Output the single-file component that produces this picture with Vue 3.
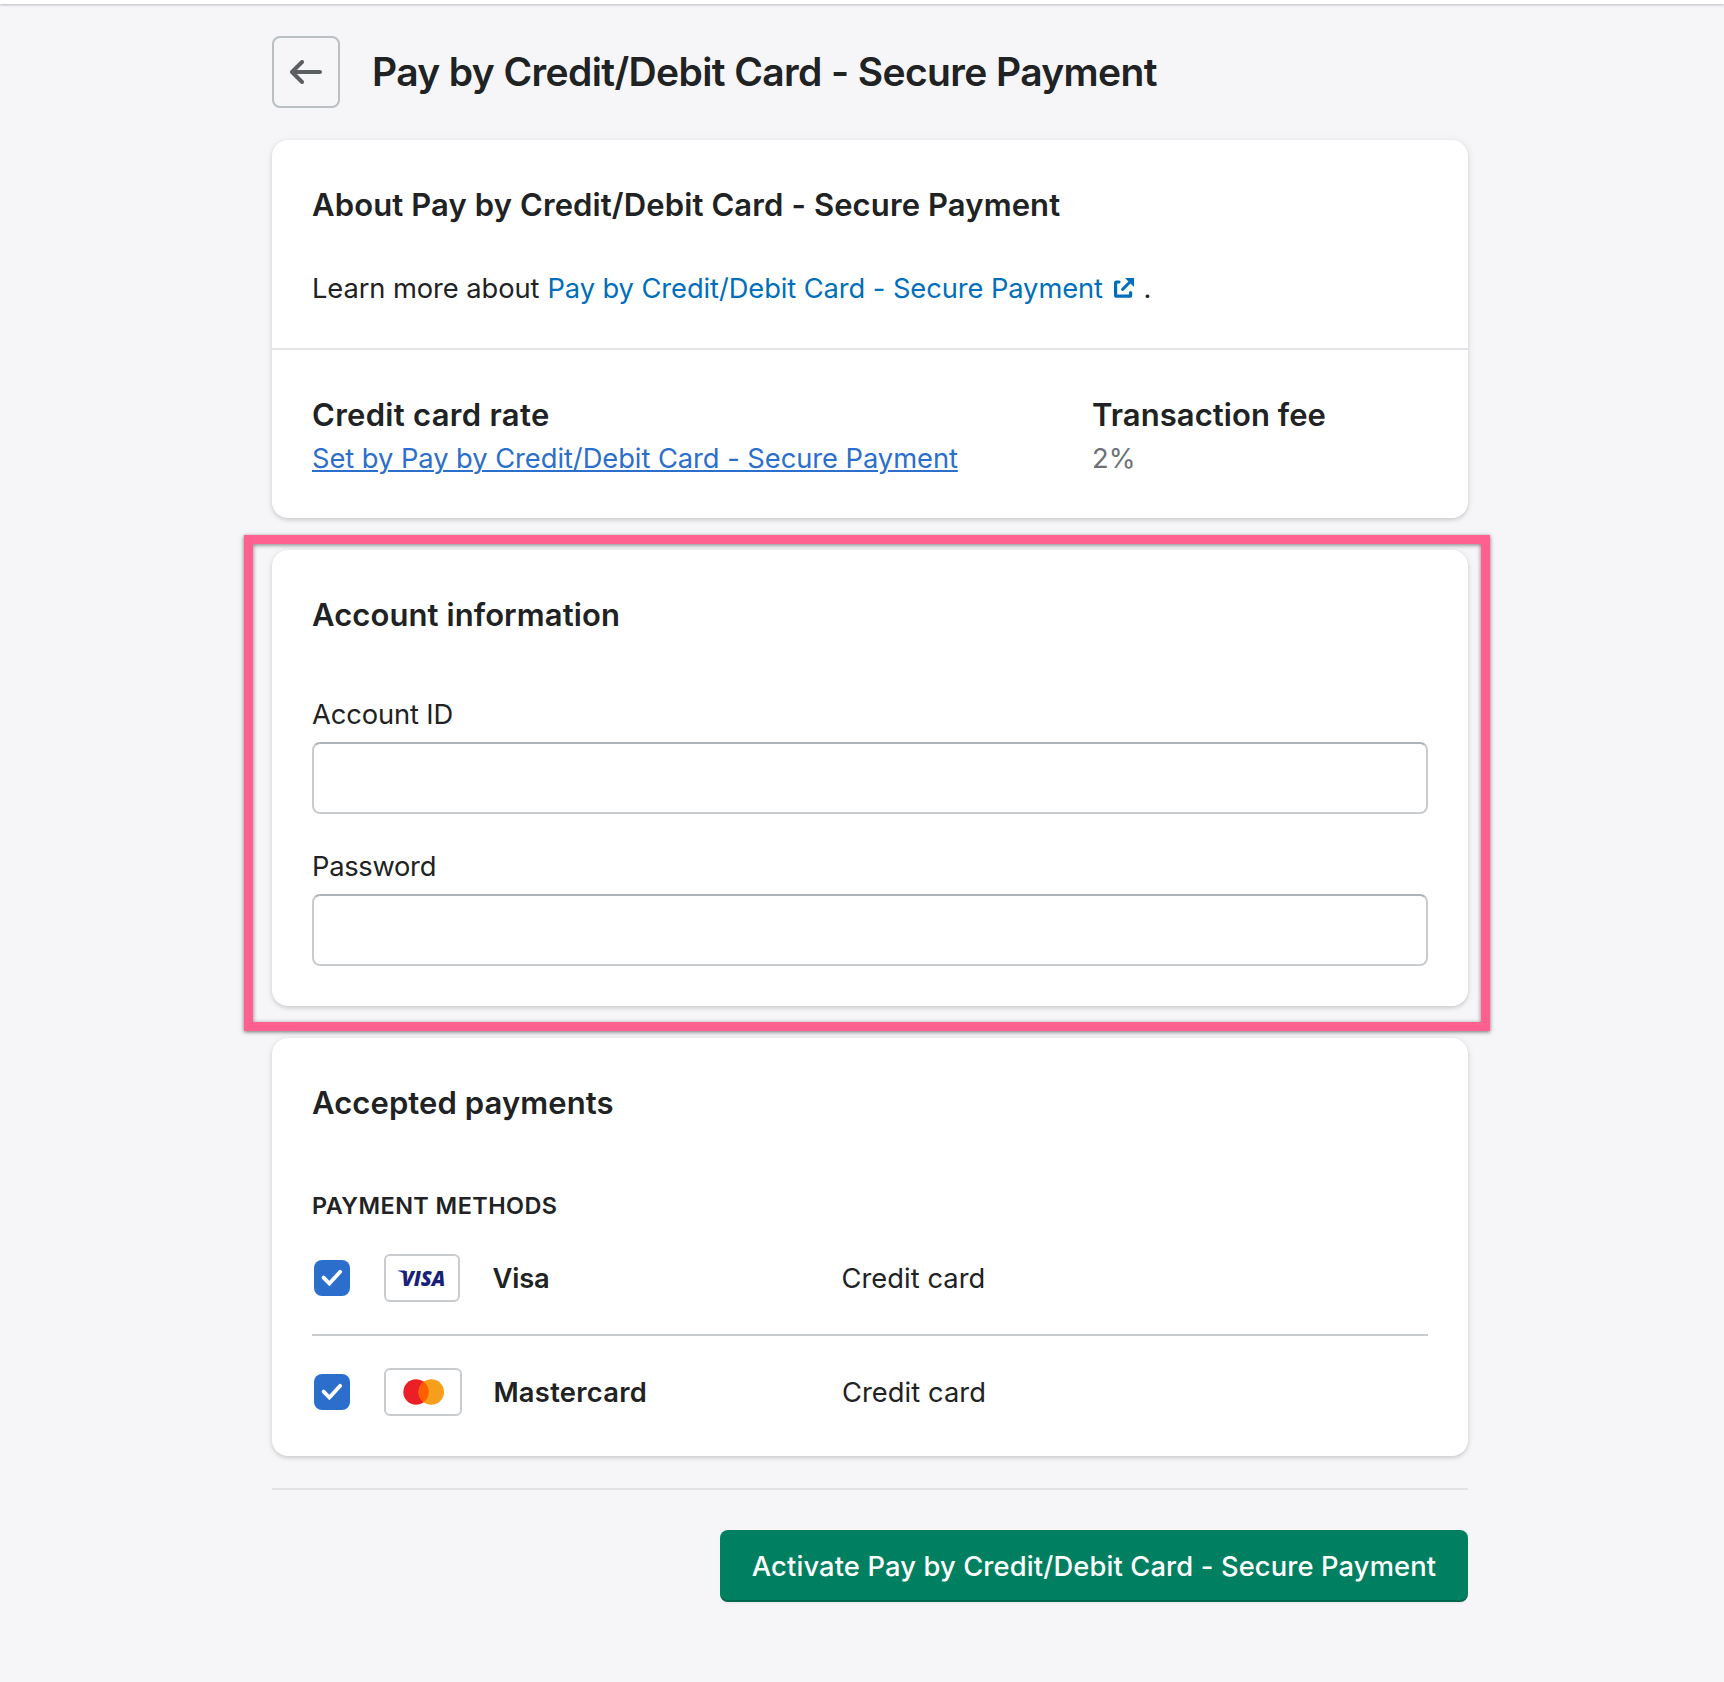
<script setup>
import { ref } from 'vue'

const name = 'Pay by Credit/Debit Card - Secure Payment'
const accountId = ref('')
const password = ref('')
const methods = ref([
  { id: 'visa', label: 'Visa', type: 'Credit card', enabled: true },
  { id: 'mastercard', label: 'Mastercard', type: 'Credit card', enabled: true },
])
</script>

<template>
  <div class="screen">
    <div class="topbar"></div>
    <main class="page">
      <header class="header">
        <button class="back" aria-label="Back">
          <svg width="32" height="24" viewBox="0 0 32 24" fill="none">
            <path d="M12 2 L2 12 L12 22 M2.4 12 H30" stroke="#5c5f62" stroke-width="4" stroke-linecap="round" stroke-linejoin="round" />
          </svg>
        </button>
        <h1>{{ name }}</h1>
      </header>

      <section class="card">
        <div class="section">
          <h2 class="about">About {{ name }}</h2>
          <p class="learn">
            <span>Learn more about</span>
            <a class="link">{{ name }}</a>
            <svg class="external" width="20" height="20" viewBox="0 0 20 20" fill="none">
              <path d="M5 4 H2.6 Q1.6 4 1.6 5 V17.2 Q1.6 18.2 2.6 18.2 H15.6 Q16.6 18.2 16.6 17.2 V14.6" stroke="#006fbb" stroke-width="3.2" stroke-linecap="round" />
              <path d="M8.6 11.4 L16 4" stroke="#006fbb" stroke-width="3" stroke-linecap="round" />
              <path d="M11 0 H20 V9 Z" fill="#006fbb" />
            </svg>
            <span class="period">.</span>
          </p>
        </div>
        <div class="section rates">
          <div class="rate">
            <h2 class="rate-title">Credit card rate</h2>
            <p><a class="set-by">Set by {{ name }}</a></p>
          </div>
          <div>
            <h2 class="fee-title">Transaction fee</h2>
            <p class="subdued">2%</p>
          </div>
        </div>
      </section>

      <section class="card highlighted">
        <div class="section">
          <h2>Account information</h2>
          <div class="fields">
            <label class="field">
              <span>Account ID</span>
              <input v-model="accountId" type="text" />
            </label>
            <label class="field">
              <span>Password</span>
              <input v-model="password" type="password" />
            </label>
          </div>
        </div>
        <div class="annotation"></div>
      </section>

      <section class="card">
        <div class="section payments">
          <h2>Accepted payments</h2>
          <h3>PAYMENT METHODS</h3>
          <ul>
            <li v-for="m in methods" :key="m.id" :class="m.id">
              <button class="check" role="checkbox" :aria-checked="m.enabled" @click="m.enabled = !m.enabled">
                <svg v-if="m.enabled" width="36" height="36" viewBox="0 0 36 36" fill="none">
                  <path d="M9.6 17.6 L15.4 23.6 L26.2 11.8" stroke="#fff" stroke-width="3.8" stroke-linecap="round" stroke-linejoin="miter" />
                </svg>
              </button>
              <span class="brand">
                <svg v-if="m.id === 'visa'" width="72" height="44" viewBox="0 0 72 44">
                  <path d="M12 14.6 H19 L21.5 21.5 C19.6 18.4 16.6 16 12 15.1 Z" fill="#1a1f78" />
                  <text x="15.4" y="29.5" textLength="44" lengthAdjust="spacingAndGlyphs" class="visa-mark">VISA</text>
                </svg>
                <svg v-else width="74" height="44" viewBox="0 0 74 44">
                  <circle cx="30" cy="22" r="12.7" fill="#eb2027" />
                  <circle cx="45.3" cy="22" r="12.7" fill="#f79e1b" />
                  <path d="M37.65 11.86 A12.7 12.7 0 0 1 37.65 32.14 A12.7 12.7 0 0 1 37.65 11.86 Z" fill="#ff5f00" />
                </svg>
              </span>
              <span class="method">{{ m.label }}</span>
              <span class="type">{{ m.type }}</span>
            </li>
          </ul>
        </div>
      </section>

      <footer class="actions">
        <button class="primary">Activate {{ name }}</button>
      </footer>
    </main>
  </div>
</template>

<style>
body {
  margin: 0;
  background: #f6f6f8;
}
</style>

<style scoped>
.screen {
  min-height: 1682px;
  background: #f6f6f8;
  color: #202223;
  font-family: "Inter", "Liberation Sans", sans-serif;
  font-size: 27.3px;
  line-height: 39px;
}
.topbar {
  height: 4px;
  background: #fff;
  box-shadow: 0 1px 3px rgba(0, 0, 0, 0.25);
}
.page {
  box-sizing: border-box;
  width: 1196px;
  margin-left: 272px;
  padding-top: 32px;
}
h1, h2, h3, p, ul {
  margin: 0;
  padding: 0;
}
button {
  font: inherit;
  padding: 0;
  border: 0;
}
.header {
  display: flex;
  height: 72px;
  margin-bottom: 32px;
}
.back {
  display: flex;
  align-items: center;
  justify-content: center;
  box-sizing: border-box;
  width: 68px;
  height: 72px;
  margin-right: 32px;
  border: 2px solid #babfc3;
  border-radius: 8px;
  background: transparent;
}
h1 {
  font-size: 39px;
  font-weight: 600;
  line-height: 71px;
  letter-spacing: -0.62px;
  white-space: nowrap;
}
.card {
  position: relative;
  margin-bottom: 32px;
  border-radius: 16px;
  background: #fff;
  box-shadow: 0 0 10px rgba(23, 24, 24, 0.05), 0 2px 4px rgba(0, 0, 0, 0.15);
}
.section {
  padding: 40px;
}
h2 {
  font-size: 31px;
  font-weight: 600;
  line-height: 49px;
  letter-spacing: 0.09px;
}
h2.about {
  letter-spacing: 0.12px;
}
h2.rate-title {
  letter-spacing: 0.3px;
}
h2.fee-title {
  letter-spacing: 0.06px;
}
.learn {
  display: flex;
  margin-top: 40px;
  letter-spacing: -0.08px;
  white-space: nowrap;
}
.link {
  margin-left: 8.1px;
  color: #006fbb;
}
.external {
  margin: 9px 0 0 11px;
}
.period {
  margin-left: 9.5px;
}
.rates {
  display: flex;
  border-top: 2px solid #e1e3e5;
}
.rate {
  width: 780px;
}
.set-by {
  color: #2c6ecb;
  letter-spacing: -0.045px;
  text-decoration: underline;
  text-decoration-thickness: 2px;
  text-underline-offset: 2px;
}
.subdued {
  color: #6d7175;
}
.highlighted {
  z-index: 1;
}
.annotation {
  position: absolute;
  inset: -15px -22px -25px -28px;
  border: 9px solid #ff6090;
  box-shadow: 0 1px 4px rgba(0, 0, 0, 0.55), inset 0 1px 4px rgba(0, 0, 0, 0.5);
  pointer-events: none;
}
.fields {
  display: flex;
  flex-direction: column;
  gap: 33px;
  margin-top: 56px;
}
.field {
  display: flex;
  flex-direction: column;
  gap: 8px;
  letter-spacing: -0.12px;
}
.field + .field {
  letter-spacing: -0.28px;
}
.field input {
  box-sizing: border-box;
  width: 100%;
  height: 72px;
  padding: 0 24px;
  border: 2px solid #c9cccf;
  border-top-color: #aeb4b9;
  border-radius: 8px;
  background: #fff;
  font: inherit;
  outline: none;
}
.payments {
  padding-bottom: 8px;
}
h3 {
  margin-top: 64px;
  margin-bottom: 2px;
  font-size: 23.4px;
  font-weight: 600;
  line-height: 29px;
  letter-spacing: 0.46px;
}
ul {
  list-style: none;
}
li {
  display: flex;
  align-items: center;
  height: 112px;
}
li + li {
  border-top: 2px solid #c9cccf;
}
.check {
  width: 36px;
  height: 36px;
  margin: 0 34px 0 2px;
  border-radius: 8px;
  background: #2c6ecb;
}
.check svg {
  display: block;
}
.brand {
  display: flex;
  border: 2px solid #c9cccf;
  border-radius: 6px;
}
.visa-mark {
  font: italic 800 21px "Open Sans", "Noto Sans", sans-serif;
  fill: #1a1f78;
}
.method {
  width: 349px;
  margin-left: 32.4px;
  padding-top: 1px;
  font-weight: 600;
  letter-spacing: -0.1px;
}
.mastercard .method {
  width: 348.6px;
  margin-left: 31.4px;
  letter-spacing: 0.3px;
}
.type {
  padding-top: 1px;
  letter-spacing: 0.06px;
}
.actions {
  display: flex;
  justify-content: flex-end;
  padding-top: 40px;
  border-top: 2px solid #e1e3e5;
}
.primary {
  box-sizing: border-box;
  width: 748px;
  height: 72px;
  padding-top: 1px;
  border-radius: 8px;
  background: #008060;
  box-shadow: inset 0 -2px 0 rgba(0, 0, 0, 0.2), 0 2px 0 rgba(0, 0, 0, 0.03);
  color: #fff;
  font-weight: 500;
  line-height: 71px;
  letter-spacing: 0.14px;
  white-space: nowrap;
}
</style>
